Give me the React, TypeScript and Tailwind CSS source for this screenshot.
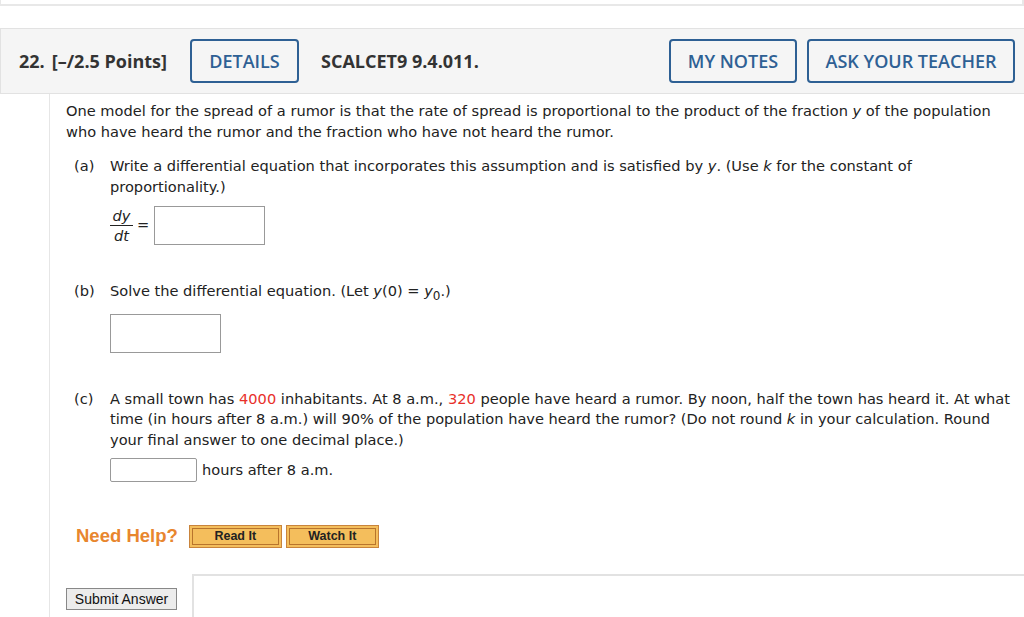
import React from "react";

function Part({ label, children }: { label: string; children: React.ReactNode }) {
  return (
    <div className="flex pl-[8px]">
      <div className="w-[36px] shrink-0">{label}</div>
      <div className="flex-1">{children}</div>
    </div>
  );
}

export default function App() {
  return (
    <div className="w-[1024px] h-[617px] overflow-hidden bg-white relative">
      <div className="h-[6px] border-b-2 border-l border-r-2 border-[#e8e8e8]" />
      <div className="mt-[22px] h-[66px] border-t border-b border-l border-[#e2e2e2] bg-[#f5f5f5] flex items-center text-[#333] font-bold text-[18px] font-['Open_Sans',sans-serif]">
        <span className="ml-[18px]">22.</span>
        <span className="ml-[7px]">[–/2.5 Points]</span>
        <button className="ml-[23px] w-[109px] h-[44px] rounded-[4px] border-2 border-[#2e6094] text-[#2e6094] font-semibold text-[18px]">
          DETAILS
        </button>
        <span className="ml-[22px]">SCALCET9 9.4.011.</span>
        <div className="flex-1" />
        <button className="w-[128px] h-[44px] rounded-[4px] border-2 border-[#2e6094] text-[#2e6094] font-semibold text-[18px]">
          MY NOTES
        </button>
        <button className="ml-[10px] mr-[9px] w-[208px] h-[44px] rounded-[4px] border-2 border-[#2e6094] text-[#2e6094] font-semibold text-[18px]">
          ASK YOUR TEACHER
        </button>
      </div>
      <div className="ml-[49px] border-l border-[#e6e6e6] pl-[16px] pr-[8px] pt-[7px] pb-[40px] text-[14.6px] leading-[20.5px] text-[#222] font-['DejaVu_Sans',Verdana,sans-serif]">
        <p>
          One model for the spread of a rumor is that the rate of spread is proportional to the product of the fraction <i>y</i> of the population who have heard the rumor and the fraction who have not heard the rumor.
        </p>
        <div className="mt-[14px]">
          <Part label="(a)">
            <p>
              Write a differential equation that incorporates this assumption and is satisfied by <i>y</i>. (Use <i>k</i> for the constant of proportionality.)
            </p>
            <div className="mt-[9px] flex items-center">
              <div className="flex flex-col items-center leading-[19px]">
                <span className="italic">dy</span>
                <span className="w-[23px] h-px bg-[#222]" />
                <span className="italic">dt</span>
              </div>
              <span className="ml-[4px] mr-[5px]">=</span>
              <div className="w-[111px] h-[39px] border border-[#999] bg-white" />
            </div>
          </Part>
        </div>
        <div className="mt-[36px]">
          <Part label="(b)">
            <p>
              Solve the differential equation. (Let <i>y</i>(0) = <i>y</i>
              <span className="text-[12px] relative top-[4px]">0</span>.)
            </p>
            <div className="mt-[11px] w-[111px] h-[39px] border border-[#999] bg-white" />
          </Part>
        </div>
        <div className="mt-[36px]">
          <Part label="(c)">
            <p>
              A small town has <span className="text-[#e8302a]">4000</span> inhabitants. At 8 a.m., <span className="text-[#e8302a]">320</span> people have heard a rumor. By noon, half the town has heard it. At what time (in hours after 8 a.m.) will 90% of the population have heard the rumor? (Do not round <i>k</i> in your calculation. Round your final answer to one decimal place.)
            </p>
            <div className="mt-[8px] flex items-center">
              <div className="w-[87px] h-[24px] border border-[#999] rounded-[2px] bg-white" />
              <span className="ml-[5px]">hours after 8 a.m.</span>
            </div>
          </Part>
        </div>
        <div className="mt-[40px] h-[28px] flex items-center font-['Liberation_Sans',Arial,sans-serif]">
          <span className="ml-[10px] text-[#e8862e] font-bold text-[18.5px]">Need Help?</span>
          <button className="ml-[11px] w-[93px] h-[23px] border border-[#c9843c] bg-[#f4be5c] p-[2px] flex">
            <span className="flex-1 border border-[#b8742c] flex items-center justify-center text-[12.5px] font-bold text-[#222]">Read It</span>
          </button>
          <button className="ml-[4px] w-[93px] h-[23px] border border-[#c9843c] bg-[#f4be5c] p-[2px] flex">
            <span className="flex-1 border border-[#b8742c] flex items-center justify-center text-[12.5px] font-bold text-[#222]">Watch It</span>
          </button>
        </div>
        <div className="mt-[24px] -mr-[8px] flex items-start">
          <button className="mt-[14px] w-[111px] h-[22px] border border-[#888] bg-[#ececec] text-[14px] text-[#111] leading-none font-['Liberation_Sans',Arial,sans-serif]">
            Submit Answer
          </button>
          <div className="ml-[15px] flex-1 h-[60px] border-t-2 border-l-2 border-[#e2e2e2]" />
        </div>
      </div>
    </div>
  );
}
